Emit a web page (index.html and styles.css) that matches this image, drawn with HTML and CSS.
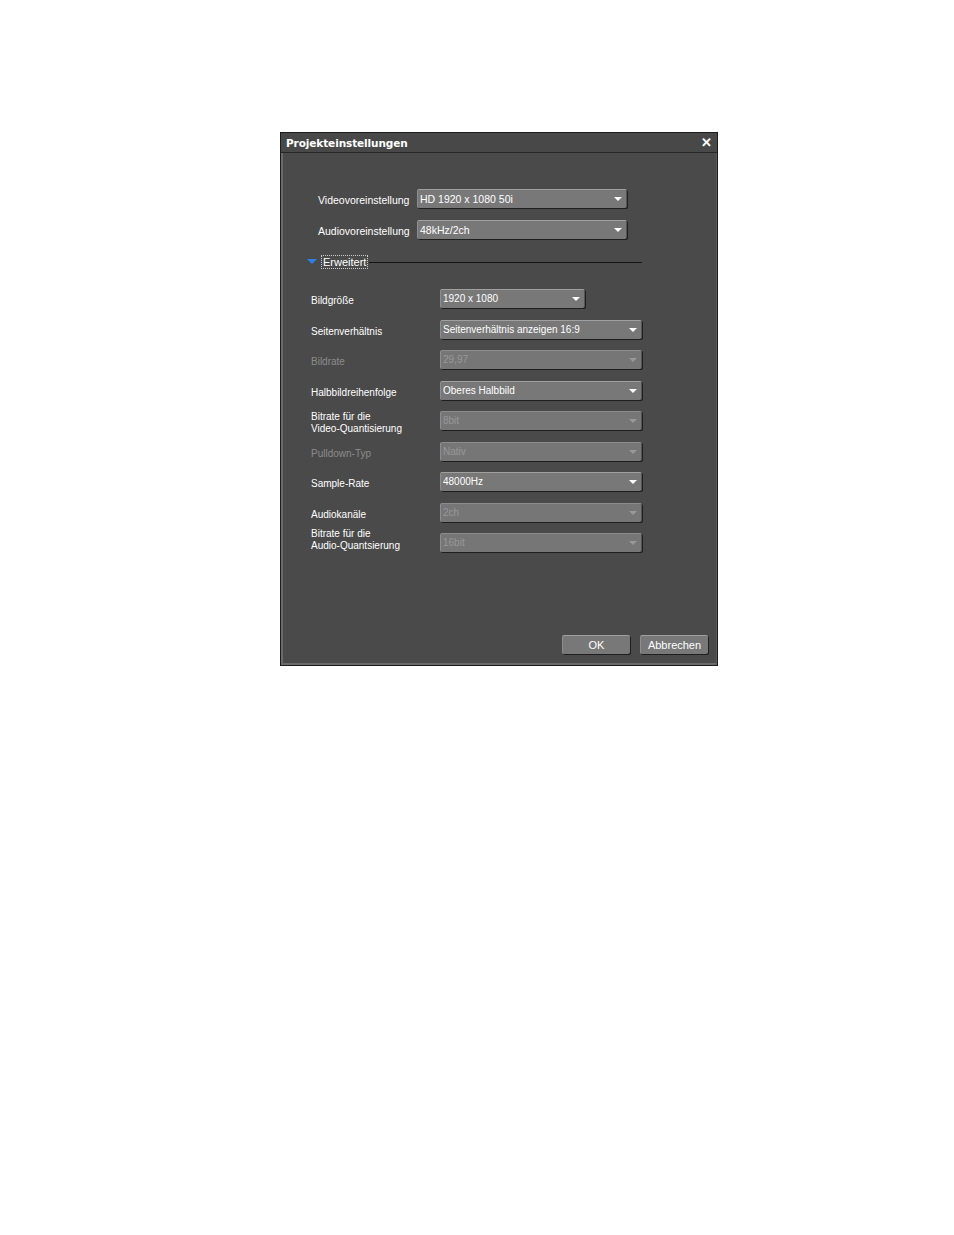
FILE: index.html
```html
<!DOCTYPE html>
<html>

<head lang="de">
    <meta charset="UTF-8">
    <title>Projekteinstellungen</title>
    <link rel="stylesheet" href="styles.css">
</head>

<body>
    <div class="dialog">
        <div class="titlebar">
            <span class="title">Projekteinstellungen</span>
            <span class="close">&#x2715;</span>
        </div>

        <div class="content">
            <!-- Voreinstellungen -->
            <div class="preset">
                <label class="plabel">Videovoreinstellung</label>
                <div class="combo wide"><span>HD 1920 x 1080 50i</span><i class="arrow"></i></div>
            </div>
            <div class="preset">
                <label class="plabel">Audiovoreinstellung</label>
                <div class="combo wide"><span>48kHz/2ch</span><i class="arrow"></i></div>
            </div>

            <div class="expander">
                <i class="tri"></i>
                <span class="exp-text">Erweitert</span>
                <span class="exp-line"></span>
            </div>

            <!-- erweiterte Einstellungen -->
            <div class="rows">
                <div class="row">
                    <label class="rlabel">Bildgröße</label>
                    <div class="combo small"><span>1920 x 1080</span><i class="arrow"></i></div>
                </div>
                <div class="row">
                    <label class="rlabel">Seitenverhältnis</label>
                    <div class="combo"><span>Seitenverhältnis anzeigen 16:9</span><i class="arrow"></i></div>
                </div>
                <div class="row off">
                    <label class="rlabel">Bildrate</label>
                    <div class="combo"><span>29,97</span><i class="arrow"></i></div>
                </div>
                <div class="row">
                    <label class="rlabel">Halbbildreihenfolge</label>
                    <div class="combo"><span>Oberes Halbbild</span><i class="arrow"></i></div>
                </div>
                <div class="row off two">
                    <label class="rlabel on">Bitrate für die<br>Video-Quantisierung</label>
                    <div class="combo"><span>8bit</span><i class="arrow"></i></div>
                </div>
                <div class="row off">
                    <label class="rlabel">Pulldown-Typ</label>
                    <div class="combo"><span>Nativ</span><i class="arrow"></i></div>
                </div>
                <div class="row">
                    <label class="rlabel">Sample-Rate</label>
                    <div class="combo"><span>48000Hz</span><i class="arrow"></i></div>
                </div>
                <div class="row off">
                    <label class="rlabel on">Audiokanäle</label>
                    <div class="combo"><span>2ch</span><i class="arrow"></i></div>
                </div>
                <div class="row off two last">
                    <label class="rlabel on">Bitrate für die<br>Audio-Quantsierung</label>
                    <div class="combo"><span>16bit</span><i class="arrow"></i></div>
                </div>
            </div>
        </div>

        <div class="footer">
            <button class="btn">OK</button>
            <button class="btn">Abbrechen</button>
        </div>
    </div>
</body>

</html>
```

FILE: styles.css
```css
body {
    margin: 0;
    background: #fff;
    font-family: "Liberation Sans", Arial, sans-serif;
}

.dialog {
    margin: 132px 0 0 280px;
    width: 438px;
    height: 534px;
    box-sizing: border-box;
    background: #4a4a4a;
    border: 1px solid #1c1c1c;
    box-shadow: inset 2px 0 0 #6a6a6a, inset -1px 0 0 #5a5a5a, inset 0 -2px 0 #6a6a6a;
    display: flex;
    flex-direction: column;
    color: #fff;
}

.titlebar {
    height: 19px;
    border-bottom: 1px solid #262626;
    display: flex;
    align-items: center;
    justify-content: space-between;
    padding: 0 5px 0 5px;
    background: #484848;
}

.title {
    font-weight: bold;
    font-family: "DejaVu Sans", sans-serif;
    font-size: 10.5px;
    letter-spacing: -0.1px;
}

.close {
    font-size: 13px;
    font-weight: bold;
    line-height: 1;
}

.content {
    padding-top: 36px;
}

.preset {
    display: flex;
    align-items: center;
    padding-left: 37px;
    margin-bottom: 12px;
    font-size: 10.5px;
}

.plabel {
    width: 99px;
    padding-top: 2px;
}

.combo {
    position: relative;
    box-sizing: border-box;
    height: 19px;
    width: 202px;
    background: #787878;
    border-top: 1px solid #a0a0a0;
    border-left: 1px solid #8e8e8e;
    border-right: 1px solid #555;
    border-radius: 2px;
    box-shadow: 1px 1px 0 #1e1e1e;
    font-size: 10px;
    line-height: 18px;
    padding-left: 2px;
    color: #fff;
}

.combo.wide {
    width: 210px;
    font-size: 10.5px;
}

.combo.small {
    width: 145px;
}

.arrow {
    position: absolute;
    right: 4px;
    top: 7px;
    width: 0;
    height: 0;
    border-left: 4px solid transparent;
    border-right: 4px solid transparent;
    border-top: 4px solid #fff;
}

.expander {
    display: flex;
    align-items: center;
    padding-left: 26px;
    margin-top: 16px;
    height: 14px;
    font-size: 11px;
}

.tri {
    width: 0;
    height: 0;
    border-left: 5px solid transparent;
    border-right: 5px solid transparent;
    border-top: 5px solid #2f7fe6;
    margin-right: 4px;
    margin-top: -2px;
}

.exp-text {
    border: 1px dotted #ccc;
    padding: 0 1px;
    line-height: 12px;
}

.exp-line {
    height: 1px;
    background: #151515;
    width: 273px;
    margin-left: 1px;
}

.rows {
    margin-top: 20px;
    padding-left: 30px;
}

.row {
    display: flex;
    align-items: center;
    height: 19px;
    margin-bottom: 11.5px;
    font-size: 10px;
}

.row.two {
    align-items: flex-start;
}

.row.two .rlabel {
    margin-top: 0;
    padding-top: 0;
    line-height: 12px;
}

.row.last {
    margin-bottom: 0;
}

.row.last .rlabel {
    margin-top: -5px;
}

.rlabel {
    width: 129px;
    padding-top: 4px;
}

.row.off .rlabel {
    color: #8c8c8c;
}

.row.off .rlabel.on {
    color: #fff;
}

.row.off .combo {
    color: #989898;
    background: #767676;
    border-top-color: #8c8c8c;
}

.row.off .arrow {
    border-top-color: #989898;
}

.footer {
    margin-top: auto;
    display: flex;
    justify-content: flex-end;
    gap: 10px;
    padding: 0 9px 11px 0;
}

.btn {
    width: 68px;
    height: 19px;
    box-sizing: border-box;
    background: #787878;
    border: none;
    border-top: 1px solid #a0a0a0;
    border-left: 1px solid #8e8e8e;
    border-radius: 2px;
    box-shadow: 1px 1px 0 #1e1e1e;
    color: #fff;
    font-family: "Liberation Sans", Arial, sans-serif;
    font-size: 11px;
    padding: 0;
}
```
